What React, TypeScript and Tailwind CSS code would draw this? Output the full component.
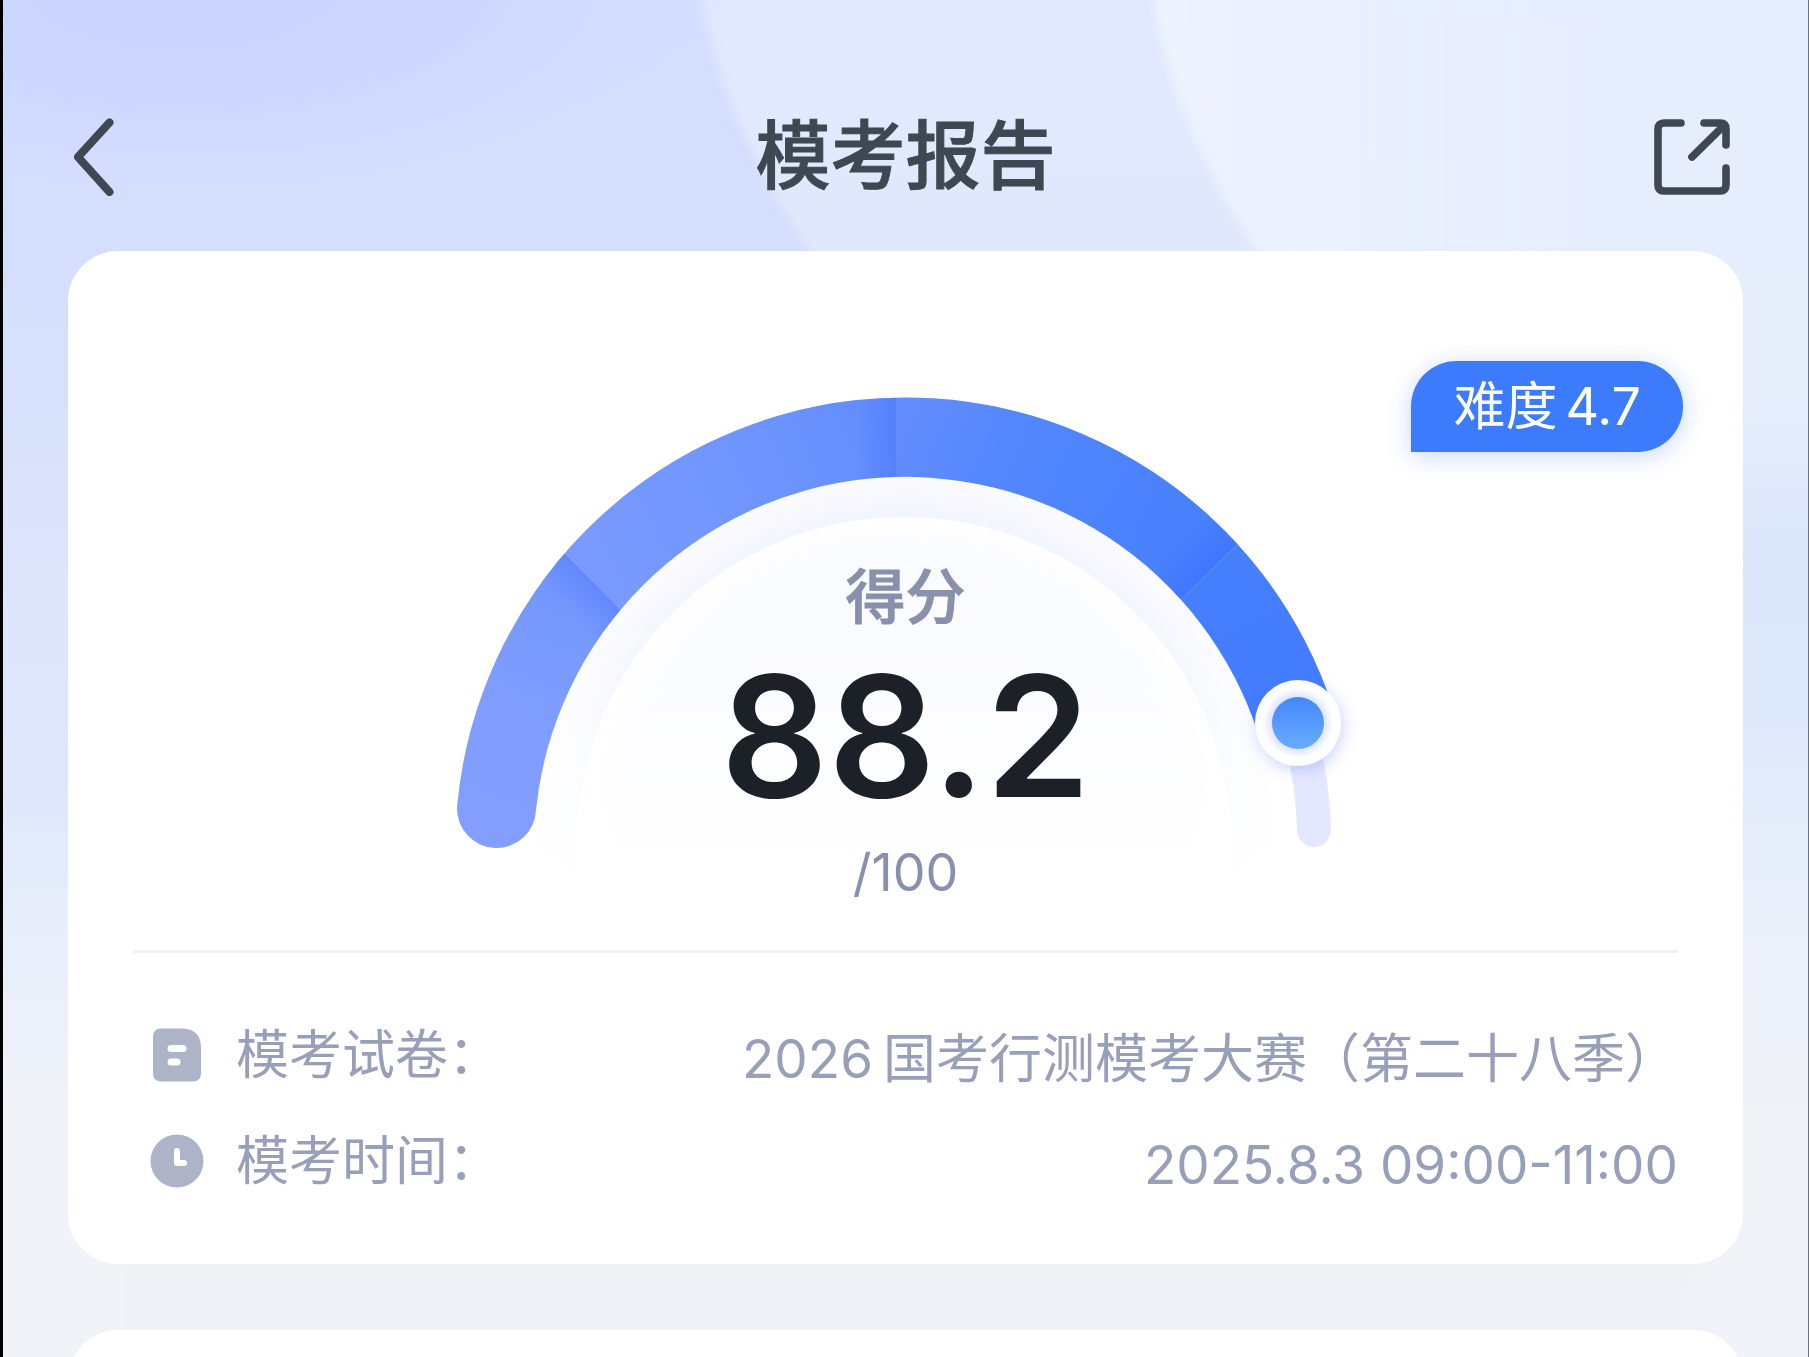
import React from 'react';

const report = {
  title: '模考报告',
  difficulty: '4.7',
  score: '88.2',
  total: '100',
  year: '2026',
  paper: '国考行测模考大赛（第二十八季）',
  time: '2025.8.3 09:00-11:00',
};

const Backdrop: React.FC = () => (
  <svg
    className="absolute inset-0 -z-10 h-full w-full"
    viewBox="0 0 1809 1357"
    preserveAspectRatio="none"
    aria-hidden="true"
  >
    <defs>
      <linearGradient id="bg-left" x1="0" y1="0" x2="0" y2="1">
        <stop offset="0" stopColor="#d3ddff" />
        <stop offset="0.2" stopColor="#d5defc" />
        <stop offset="0.42" stopColor="#dce5fa" />
        <stop offset="0.58" stopColor="#dfe8fb" />
        <stop offset="0.7" stopColor="#e8eefa" />
        <stop offset="0.82" stopColor="#f0f3f8" />
        <stop offset="1" stopColor="#f2f3f8" />
      </linearGradient>
      <linearGradient id="bg-mid" x1="0" y1="0" x2="0" y2="1">
        <stop offset="0" stopColor="#e0e8fe" />
        <stop offset="0.2" stopColor="#e1e9fe" />
        <stop offset="0.35" stopColor="#e0e8fb" />
        <stop offset="1" stopColor="#eff1f6" />
      </linearGradient>
      <linearGradient id="bg-right" x1="0" y1="0" x2="0" y2="1">
        <stop offset="0" stopColor="#e5edfe" />
        <stop offset="0.2" stopColor="#e6edfc" />
        <stop offset="0.3" stopColor="#e6eefc" />
        <stop offset="0.42" stopColor="#dbe6fb" />
        <stop offset="0.55" stopColor="#dfe9fb" />
        <stop offset="0.7" stopColor="#eaf0fa" />
        <stop offset="0.85" stopColor="#f0f2f7" />
        <stop offset="1" stopColor="#f1f3f8" />
      </linearGradient>
      <linearGradient id="bg-shine" x1="0" y1="0" x2="1" y2="0">
        <stop offset="0" stopColor="#f1f5ff" stopOpacity="0.8" />
        <stop offset="0.5" stopColor="#e9effe" stopOpacity="0.4" />
        <stop offset="0.9" stopColor="#e3ebfe" stopOpacity="0" />
      </linearGradient>
      <radialGradient id="bg-corner">
        <stop offset="0" stopColor="#c8d2ff" />
        <stop offset="0.5" stopColor="#ccd6ff" stopOpacity="0.8" />
        <stop offset="1" stopColor="#d3ddff" stopOpacity="0" />
      </radialGradient>
      <filter id="bg-soft" x="-5%" y="-5%" width="110%" height="110%">
        <feGaussianBlur stdDeviation="5" />
      </filter>
      <filter id="bg-softer" x="-5%" y="-20%" width="110%" height="140%">
        <feGaussianBlur stdDeviation="24" />
      </filter>
    </defs>
    <rect width="1809" height="1357" fill="url(#bg-left)" />
    <ellipse cx="180" cy="-20" rx="560" ry="240" fill="url(#bg-corner)" />
    <path d="M698-20C708 80 755 170 815 262L1100 700H1830V-20Z" fill="url(#bg-mid)" filter="url(#bg-soft)" />
    <path d="M1152-20C1162 90 1212 180 1265 262L1500 1340H1850V-20Z" fill="url(#bg-right)" filter="url(#bg-soft)" />
    <path d="M1152-20C1162 90 1212 180 1265 262H1850V-20Z" fill="url(#bg-shine)" filter="url(#bg-soft)" />
    <rect x="110" y="1220" width="1590" height="200" fill="#eff1f6" filter="url(#bg-softer)" />
  </svg>
);

const BackIcon: React.FC = () => (
  <svg className="h-20 w-10" viewBox="0 -1 40 80" fill="none" stroke="#3d4852" strokeWidth="8" strokeLinecap="round" strokeLinejoin="round">
    <path d="M35.500 5.500L4 40L35.500 75" />
  </svg>
);

const ShareIcon: React.FC = () => (
  <svg className="h-[78px] w-[76px]" viewBox="0 -2 76 78" fill="none" stroke="#3d4852" strokeWidth="7.600" strokeLinecap="round" strokeLinejoin="round">
    <path d="M27 4H10Q4 4 4 10V66Q4 72 10 72H66Q72 72 72 66V49" />
    <path d="M50 4H66Q72 4 72 10V26" />
    <path d="M38 38L70 6.500" />
  </svg>
);

const PaperIcon: React.FC = () => (
  <svg className="size-[54px] shrink-0" viewBox="0 0 54 54" aria-hidden="true">
    <path d="M11 0.500H34Q51 2 51 20V45Q51 53.500 43 53.500H11Q3 53.500 3 45V9Q3 0.500 11 0.500Z" fill="#aeb4c8" />
    <path d="M21 20.500H33M21 34H27" stroke="#fff" strokeWidth="7" strokeLinecap="round" />
  </svg>
);

const ClockIcon: React.FC = () => (
  <svg className="size-[54px] shrink-0" viewBox="0 0 54 54" aria-hidden="true">
    <circle cx="27" cy="27" r="26.500" fill="#aeb4c8" />
    <path d="M27 17V29H34" fill="none" stroke="#fff" strokeWidth="6" strokeLinecap="round" strokeLinejoin="round" />
  </svg>
);

const Gauge: React.FC = () => (
  <svg className="col-start-1 row-start-1 w-full" viewBox="406 378 1000 520" aria-hidden="true">
    <defs>
      <linearGradient id="seg-1" gradientUnits="userSpaceOnUse" x1="496" y1="847" x2="592" y2="580">
        <stop offset="0" stopColor="#839eff" />
        <stop offset="0.5" stopColor="#7f9dff" />
        <stop offset="1" stopColor="#7196fd" />
      </linearGradient>
      <linearGradient id="seg-2" gradientUnits="userSpaceOnUse" x1="592" y1="580" x2="896" y2="437">
        <stop offset="0" stopColor="#7a9aff" />
        <stop offset="0.5" stopColor="#7096fd" />
        <stop offset="1" stopColor="#628dfd" />
      </linearGradient>
      <linearGradient id="seg-3" gradientUnits="userSpaceOnUse" x1="896" y1="437" x2="1210" y2="571">
        <stop offset="0" stopColor="#638dfd" />
        <stop offset="0.35" stopColor="#5186fd" />
        <stop offset="1" stopColor="#477ffd" />
      </linearGradient>
      <linearGradient id="seg-4" gradientUnits="userSpaceOnUse" x1="1210" y1="571" x2="1298" y2="723">
        <stop offset="0" stopColor="#4680fd" />
        <stop offset="1" stopColor="#437bfd" />
      </linearGradient>
      <linearGradient id="shade-1" gradientUnits="userSpaceOnUse" x1="565" y1="608" x2="592" y2="581">
        <stop offset="0" stopColor="#5b80ff" stopOpacity="0" />
        <stop offset="1" stopColor="#5b80ff" stopOpacity="0.65" />
      </linearGradient>
      <linearGradient id="shade-2" gradientUnits="userSpaceOnUse" x1="856" y1="437" x2="896" y2="437">
        <stop offset="0" stopColor="#4d79ff" stopOpacity="0" />
        <stop offset="1" stopColor="#4d79ff" stopOpacity="0.65" />
      </linearGradient>
      <linearGradient id="shade-3" gradientUnits="userSpaceOnUse" x1="1180" y1="541" x2="1210" y2="571">
        <stop offset="0" stopColor="#3b70ff" stopOpacity="0" />
        <stop offset="1" stopColor="#3b70ff" stopOpacity="0.6" />
      </linearGradient>
      <radialGradient id="ring" gradientUnits="userSpaceOnUse" cx="904" cy="846" r="371">
        <stop offset="0.88" stopColor="#eff4fd" />
        <stop offset="0.93" stopColor="#f6f8fe" />
        <stop offset="1" stopColor="#fbfbff" />
      </radialGradient>
      <radialGradient id="dome" gradientUnits="userSpaceOnUse" cx="904" cy="844" r="327">
        <stop offset="0.88" stopColor="#f9faff" />
        <stop offset="1" stopColor="#fff" />
      </radialGradient>
      <linearGradient id="fade" x1="0" y1="0" x2="0" y2="1">
        <stop offset="0" stopColor="#fff" stopOpacity="0" />
        <stop offset="0.4" stopColor="#fff" stopOpacity="0.2" />
        <stop offset="0.75" stopColor="#fff" stopOpacity="0.8" />
        <stop offset="1" stopColor="#fff" stopOpacity="1" />
      </linearGradient>
      <linearGradient id="knob" x1="0" y1="0" x2="0" y2="1">
        <stop offset="0" stopColor="#4587fa" />
        <stop offset="1" stopColor="#68acff" />
      </linearGradient>
      <radialGradient id="knob-rim">
        <stop offset="0.58" stopColor="#dbe2ff" />
        <stop offset="0.82" stopColor="#fff" />
      </radialGradient>
      <filter id="knob-glow" x="-50%" y="-50%" width="200%" height="200%">
        <feDropShadow dx="2" dy="4" stdDeviation="8" floodColor="#4d6dff" floodOpacity="0.3" />
      </filter>
      <clipPath id="band">
        <path d="M457 807A450 450 0 0 1 1334 711L1298 723L1258.500 735A371 371 0 0 0 536 810A39.500 39.500 0 0 1 457 807Z" />
      </clipPath>
    </defs>

    <circle cx="904" cy="846" r="371" fill="url(#ring)" />
    <circle cx="904" cy="844" r="327" fill="url(#dome)" />
    <rect x="525" y="470" width="760" height="430" fill="url(#fade)" />

    <path d="M1297 723A410 410 0 0 1 1314 830" fill="none" stroke="#e4e8ff" strokeWidth="34" strokeLinecap="round" />

    <g clipPath="url(#band)">
      <path d="M440 428L673 662L673 880H440Z" fill="url(#seg-1)" />
      <path d="M440 428L673 662L673 880H440Z" fill="url(#shade-1)" />
      <path d="M440 428L673 662L896 600V390H440Z" fill="url(#seg-2)" />
      <rect x="840" y="390" width="56" height="110" fill="url(#shade-2)" />
      <path d="M896 390H1392L1128 653L896 600Z" fill="url(#seg-3)" />
      <path d="M1100 390H1392L1128 653L1000 600Z" fill="url(#shade-3)" />
      <path d="M1392 390L1128 653V760H1392Z" fill="url(#seg-4)" />
    </g>

    <g filter="url(#knob-glow)">
      <circle cx="1298" cy="723" r="43" fill="url(#knob-rim)" />
    </g>
    <circle cx="1298" cy="723" r="26" fill="url(#knob)" />
  </svg>
);

interface InfoRowProps {
  icon: React.ReactNode;
  label: string;
  children: React.ReactNode;
}

const InfoRow: React.FC<InfoRowProps> = ({ icon, label, children }) => (
  <div className="flex items-center justify-between leading-[54px]">
    <dt className="flex items-center gap-8">
      {icon}
      {label}
    </dt>
    <dd className="flex gap-2.5 pt-2">{children}</dd>
  </div>
);

const App: React.FC = () => {
  return (
    <div className="relative isolate min-h-screen overflow-hidden border-l-[3px] border-r border-l-black border-r-gray-500 font-[Inter,'Noto_Sans_CJK_SC',sans-serif]">
      <Backdrop />

      <header className="grid grid-cols-[1fr_auto_1fr] items-center px-[68px] pt-[100px] pb-[39px]">
        <button type="button" aria-label="返回" className="ml-[3px] justify-self-start">
          <BackIcon />
        </button>
        <h1 className="text-[75px] leading-[112px] font-medium text-[#3d4852] [-webkit-text-stroke:1px_currentColor]">
          {report.title}
        </h1>
        <button type="button" aria-label="分享" className="mr-[10px] justify-self-end">
          <ShareIcon />
        </button>
      </header>

      <main className="flex flex-col gap-[66px] px-[65px]">
        <section className="relative rounded-[50px] bg-white px-[65px] pt-[127px] pb-[72px]">
          <div className="absolute top-[110px] right-[60px] flex gap-2 rounded-[46px] rounded-bl-none bg-[#3d7bfd] px-[42px] text-[52px] leading-[91px] text-white shadow-[0_4px_24px_rgba(61,110,255,0.28)]">
            <span>难度</span>
            <span>{report.difficulty}</span>
          </div>

          <div className="mx-auto grid max-w-[1000px]">
            <Gauge />
            <div className="z-10 col-start-1 row-start-1 flex flex-col items-center pt-[183px] text-[#8990ab]">
              <p className="text-[60px] leading-[72px] font-medium [-webkit-text-stroke:1px_currentColor]">得分</p>
              <p className="text-[168px] leading-[206px] font-semibold text-[#1c2127]">{report.score}</p>
              <p className="text-[52px] leading-[68px]">/{report.total}</p>
            </div>
          </div>

          <hr className="mt-[43px] border-t-[3px] border-[#f0f1f7]" />

          <dl className="mt-[71px] flex flex-col gap-11 pl-[17px] text-[53px] text-[#989fb8]">
            <InfoRow icon={<PaperIcon />} label="模考试卷：">
              <span>{report.year}</span>
              <span>{report.paper}</span>
            </InfoRow>
            <InfoRow icon={<ClockIcon />} label="模考时间：">
              {report.time}
            </InfoRow>
          </dl>
        </section>

        <div className="h-[27px] overflow-hidden">
          <section className="h-24 rounded-t-[50px] bg-white" />
        </div>
      </main>
    </div>
  );
};

export default App;
